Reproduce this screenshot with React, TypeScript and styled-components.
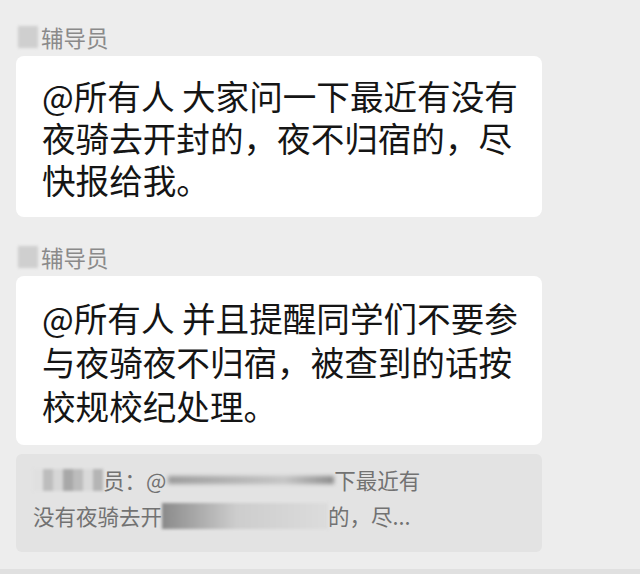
import * as React from 'react';
import styled, { createGlobalStyle } from 'styled-components';

const GlobalStyle = createGlobalStyle`
  html, body {
    margin: 0;
    padding: 0;
    background: #ededed;
  }
  body {
    font-family: "Noto Sans CJK SC", "Noto Sans", sans-serif;
  }
`;

const Page = styled.div`
  width: 640px;
  height: 574px;
  box-sizing: border-box;
  padding: 24px 98px 0 16px;
  background: #ededed;
  display: flex;
  flex-direction: column;
  overflow: hidden;
`;

const Message = styled.div`
  display: flex;
  flex-direction: column;
  margin-bottom: 27px;
`;

const NameRow = styled.div`
  display: flex;
  align-items: center;
  height: 26px;
  margin-bottom: 6px;
`;

const BlurAvatar = styled.span`
  width: 20px;
  height: 22px;
  margin: 0 3px 0 2px;
  background: #cfcfcf;
  filter: blur(1.5px);
`;

const Name = styled.span`
  font-size: 22.5px;
  line-height: 26px;
  color: #8a8a8a;
`;

const Bubble = styled.div<{ $lh: number; $pt: number }>`
  position: relative;
  background: #ffffff;
  border-radius: 8px;
  padding: ${({ $pt }) => $pt}px 18px ${({ $pt }) => $pt - 3}px 26px;
  font-size: 33.6px;
  line-height: ${({ $lh }) => $lh}px;
  color: #151515;

  ::before {
    content: '';
    position: absolute;
    left: -7px;
    top: 30px;
    border-style: solid;
    border-width: 7px 7px 7px 0;
    border-color: transparent #f7f7f7 transparent transparent;
  }
`;

const Quote = styled.div`
  background: #e3e3e3;
  border-radius: 6px;
  padding: 8px 20px 18px 17px;
  font-size: 21.5px;
  line-height: 36px;
  color: #727272;
  margin-top: -18px;
`;

const QuoteLine = styled.div`
  display: flex;
  align-items: center;
  white-space: nowrap;
`;

const Pixelated = styled.span`
  display: inline-flex;
  width: 70px;
  height: 22px;
  filter: blur(1.5px);
`;

const Pixel = styled.span<{ $c: string }>`
  flex: 1;
  background: ${({ $c }) => $c};
`;

const Smear = styled.span<{ $w: number }>`
  display: inline-block;
  width: ${({ $w }) => $w}px;
  height: 8px;
  margin-left: 2px;
  background: linear-gradient(to right, #9a9a9a, #c4c4c4 70%, #8a8a8a);
  filter: blur(2px);
`;

const BlurBlock = styled.span<{ $w: number }>`
  display: inline-block;
  width: ${({ $w }) => $w}px;
  height: 26px;
  background: linear-gradient(to right, #8a8a8a, #cdcdcd 45%, #dcdcdc);
  filter: blur(1.5px);
`;

const BottomEdge = styled.div`
  margin-top: auto;
  margin-left: -16px;
  margin-right: -98px;
  height: 5px;
  background: #e0e0e0;
`;

const pixels = ['#e0e0e0', '#bdbdbd', '#d6d6d6', '#a8a8a8', '#bcbcbc', '#d9d9d9', '#b5b5b5'];

export default function App() {
  return (
    <>
      <GlobalStyle />
      <Page>
        <Message>
          <NameRow>
            <BlurAvatar />
            <Name>辅导员</Name>
          </NameRow>
          <Bubble $lh={42} $pt={19}>
            @所有人 大家问一下最近有没有夜骑去开封的，夜不归宿的，尽快报给我。
          </Bubble>
        </Message>
        <Message>
          <NameRow>
            <BlurAvatar />
            <Name>辅导员</Name>
          </NameRow>
          <Bubble $lh={44} $pt={20}>
            @所有人 并且提醒同学们不要参与夜骑夜不归宿，被查到的话按校规校纪处理。
          </Bubble>
        </Message>
        <Quote>
          <QuoteLine>
            <Pixelated>
              {pixels.map((c, i) => (
                <Pixel key={i} $c={c} />
              ))}
            </Pixelated>
            员：@
            <Smear $w={166} />
            下最近有
          </QuoteLine>
          <QuoteLine>
            没有夜骑去开
            <BlurBlock $w={166} />
            的，尽...
          </QuoteLine>
        </Quote>
        <BottomEdge />
      </Page>
    </>
  );
}
